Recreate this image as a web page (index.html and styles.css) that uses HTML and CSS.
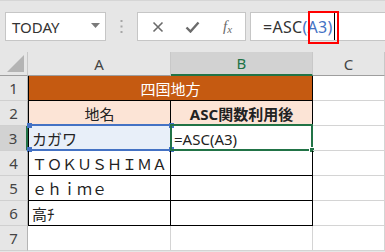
FILE: index.html
```html
<!DOCTYPE html>
<html lang="ja">
<head>
    <meta charset="UTF-8">
    <title>ASC関数</title>
    <link rel="stylesheet" href="styles.css">
</head>
<body>
    <div class="toolbar">
        <div class="namebox">
            <span>TODAY</span>
            <svg class="drop" width="9" height="5" viewBox="0 0 9 5"><path d="M0 0h9L4.5 5z" fill="#7a7a7a"/></svg>
        </div>
        <div class="grip">
            <svg width="3" height="13" viewBox="0 0 3 13"><rect x="0.5" y="0" width="2" height="2" fill="#a6a6a6"/><rect x="0.5" y="5.5" width="2" height="2" fill="#a6a6a6"/><rect x="0.5" y="11" width="2" height="2" fill="#a6a6a6"/></svg>
        </div>
        <div class="fxbtns">
            <span class="btn">
                <svg width="12" height="12" viewBox="0 0 12 12"><path d="M1.5 1.5l9 9M10.5 1.5l-9 9" stroke="#6b6b6b" stroke-width="1.6"/></svg>
            </span>
            <span class="btn">
                <svg width="15" height="12" viewBox="0 0 15 12"><path d="M1.5 6.5l4 4 8-9" stroke="#6b6b6b" stroke-width="2.4" fill="none"/></svg>
            </span>
            <span class="btn fx"><i>f</i><i class="x">x</i></span>
        </div>
        <div class="formula">
            <span>=ASC</span><span class="ref">(A3)</span><span class="caret"></span>
            <span class="mark"></span>
        </div>
    </div>

    <div class="sheet">
        <div class="corner"><span class="tri"></span></div>
        <div class="colhead">A</div>
        <div class="colhead active">B</div>
        <div class="colhead">C</div>

        <div class="rowhead">1</div>
        <div class="cell t a title">四国地方</div>
        <div class="cell"></div>

        <div class="rowhead">2</div>
        <div class="cell t a head">地名</div>
        <div class="cell t head bold">ASC関数利用後</div>
        <div class="cell"></div>

        <div class="rowhead active">3</div>
        <div class="cell t a refcell">カガワ<span class="refsel"><i class="h tl"></i><i class="h tr"></i><i class="h bl"></i><i class="h br"></i></span></div>
        <div class="cell t cur">=ASC(A3)<span class="sel"><i class="fill"></i></span></div>
        <div class="cell"></div>

        <div class="rowhead">4</div>
        <div class="cell t a">ＴＯＫＵＳＨＩＭＡ</div>
        <div class="cell t"></div>
        <div class="cell"></div>

        <div class="rowhead">5</div>
        <div class="cell t a">ｅｈｉｍｅ</div>
        <div class="cell t"></div>
        <div class="cell"></div>

        <div class="rowhead">6</div>
        <div class="cell t a">高ﾁ</div>
        <div class="cell t"></div>
        <div class="cell"></div>

        <div class="rowhead">7</div>
        <div class="cell"></div>
        <div class="cell"></div>
        <div class="cell"></div>
    </div>
</body>
</html>
```

FILE: styles.css
```css
* {
    box-sizing: border-box;
}
body {
    margin: 0;
    width: 385px;
    height: 252px;
    overflow: hidden;
    background: #e6e6e6;
    font-family: "Noto Sans", "Noto Sans CJK JP", sans-serif;
}
.toolbar {
    display: flex;
    height: 52px;
    padding: 11px 0 11px 5px;
    border-top: 1px solid #d6d6d6;
}
.namebox {
    width: 101px;
    background: white;
    border: 1px solid #c6c6c6;
    display: flex;
    align-items: center;
    justify-content: space-between;
    padding: 0 5px 0 6px;
    font-size: 15px;
    color: #333;
}
.drop {
    margin-top: -2px;
}
.grip {
    width: 31px;
    display: flex;
    align-items: center;
    justify-content: center;
    padding-right: 1px;
}
.fxbtns {
    width: 109px;
    background: white;
    border: 1px solid #c6c6c6;
    display: flex;
    align-items: center;
    padding-left: 2px;
}
.btn {
    width: 35px;
    display: flex;
    justify-content: center;
    align-items: center;
}
.fx {
    font-family: "Liberation Serif", serif;
    color: #6b6b6b;
    font-size: 15px;
}
.fx .x {
    font-size: 11px;
    margin-top: 4px;
}
.formula {
    position: relative;
    flex: 1;
    background: white;
    border: 1px solid #c6c6c6;
    border-right: none;
    margin-left: 4px;
    display: flex;
    align-items: center;
    padding-left: 12px;
    font-size: 16px;
    letter-spacing: 0.3px;
    color: #333;
}
.ref {
    color: #4472c4;
}
.caret {
    width: 1px;
    height: 27px;
    background: #000;
    margin-left: 1px;
}
.mark {
    position: absolute;
    left: 57px;
    top: -2px;
    width: 31px;
    height: 33px;
    border: 2px solid #ff0000;
}
.sheet {
    display: grid;
    grid-template-columns: 28px 143px 142px 72px;
    grid-template-rows: 24px repeat(7, 25px);
    background: white;
    font-size: 15px;
    color: #222;
}
.corner {
    background: #e6e6e6;
    border-right: 1px solid #c8c8c8;
    border-bottom: 1px solid #9e9e9e;
    position: relative;
}
.tri {
    position: absolute;
    right: 3px;
    bottom: 3px;
    width: 0;
    height: 0;
    border-left: 17px solid transparent;
    border-bottom: 17px solid #b4b4b4;
}
.colhead {
    background: #e6e6e6;
    border-right: 1px solid #c8c8c8;
    border-bottom: 1px solid #9e9e9e;
    display: flex;
    align-items: center;
    justify-content: center;
    color: #444;
}
.colhead.active {
    background: #d2d2d2;
    color: #217346;
    border-bottom: 2px solid #217346;
}
.rowhead {
    background: #e6e6e6;
    border-right: 1px solid #b4b4b4;
    border-bottom: 1px solid #d0d0d0;
    display: flex;
    align-items: center;
    justify-content: center;
    color: #444;
}
.rowhead.active {
    background: #d2d2d2;
    border-right: 2px solid #217346;
}
.cell {
    border-right: 1px solid #d4d4d4;
    border-bottom: 1px solid #d4d4d4;
    display: flex;
    align-items: center;
    padding: 1px 3px 0;
    white-space: nowrap;
    position: relative;
}
.cell.t {
    border-right-color: #000;
    border-bottom-color: #000;
}
.cell.a {
    border-left: 1px solid #000;
}
.title {
    grid-column: span 2;
    background: #c55a11;
    color: white;
    justify-content: center;
}
.head {
    background: #fce4d6;
    justify-content: center;
}
.bold {
    font-weight: bold;
}
.refcell {
    background: #e8eff9;
}
.refsel {
    position: absolute;
    left: -1px;
    right: -1px;
    top: -2px;
    bottom: -1px;
    border-top: 2px solid #4472c4;
    border-bottom: 2px solid #4472c4;
}
.h {
    position: absolute;
    width: 5px;
    height: 5px;
    background: #4472c4;
}
.tl { left: -1px; top: -3px; }
.tr { right: -3px; top: -3px; }
.bl { left: -1px; bottom: -3px; }
.br { right: -3px; bottom: -3px; }
.sel {
    position: absolute;
    left: -1px;
    top: -2px;
    right: -1px;
    bottom: -1px;
    border: 2px solid #217346;
}
.fill {
    position: absolute;
    right: -4px;
    bottom: -4px;
    width: 6px;
    height: 6px;
    background: #217346;
    border: 1px solid white;
}
```
